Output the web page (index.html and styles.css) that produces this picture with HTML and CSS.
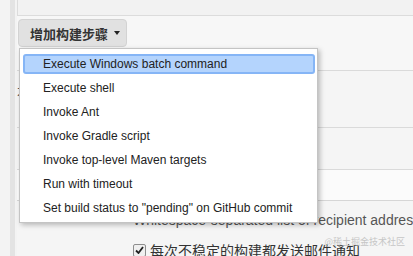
FILE: index.html
```html
<!DOCTYPE html>
<html lang="zh">
<head>
  <meta charset="UTF-8" />
  <title>增加构建步骤</title>
  <link rel="stylesheet" href="styles.css">
</head>
<body>
  <div class="page">
    <div class="rail"><div class="rail-band"></div></div>

    <div class="main">
      <div class="top-box"></div>

      <div class="steps">
        <button class="add-step">增加构建步骤 <span class="caret"></span></button>
      </div>

      <div class="form-row">
        <span class="row-label">不稳定构建</span>
      </div>
      <div class="form-row short"></div>
      <div class="form-input"></div>

      <div class="help">Whitespace-separated list of recipient addresses</div>

      <div class="check-row">
        <span class="checkbox">
          <svg width="9" height="8" viewBox="0 0 9 8"><path d="M1 4.5 L3.5 7 L8 1" fill="none" stroke="#222" stroke-width="1.8"/></svg>
        </span>
        <span>每次不稳定的构建都发送邮件通知</span>
      </div>
    </div>
  </div>

  <ul class="menu">
    <li class="active">Execute Windows batch command</li>
    <li>Execute shell</li>
    <li>Invoke Ant</li>
    <li>Invoke Gradle script</li>
    <li>Invoke top-level Maven targets</li>
    <li>Run with timeout</li>
    <li>Set build status to "pending" on GitHub commit</li>
  </ul>

  <div class="watermark">@稀土掘金技术社区</div>
</body>
</html>
```

FILE: styles.css
```css
* { margin: 0; padding: 0; box-sizing: border-box; }

body {
  font-family: "Liberation Sans", Arial, "Noto Sans CJK SC", sans-serif;
  background: #f5f5f5;
  color: #333;
  width: 413px;
  height: 256px;
  overflow: hidden;
  position: relative;
}

.page {
  display: flex;
  height: 256px;
}

.rail {
  width: 17px;
  flex: none;
  background: #f3f3f3;
  padding-left: 10px;
}

.rail-band {
  width: 5px;
  height: 100%;
  background: #e3e3e3;
}

.main {
  flex: 1;
}

.top-box {
  height: 16px;
  background: #f2f2f2;
  border-left: 1px solid #dcdcdc;
  border-bottom: 1px solid #dcdcdc;
}

.steps {
  height: 55px;
  padding: 3px 0 0 1px;
  border-bottom: 1px solid #dadada;
  background: #f7f7f7;
}

.add-step {
  display: flex;
  align-items: center;
  height: 28px;
  width: 109px;
  padding: 0 0 0 11px;
  background: #e1e1e1;
  border: 1px solid #d3d3d3;
  border-radius: 4px;
  font-family: "Noto Sans CJK SC", sans-serif;
  font-size: 13px;
  font-weight: bold;
  color: #333;
}

.caret {
  margin-left: 6px;
  border-left: 3.5px solid transparent;
  border-right: 3.5px solid transparent;
  border-top: 4px solid #222;
}

.form-row {
  height: 57px;
  border-bottom: 1px solid #dadada;
  padding-top: 12px;
}

.form-row.short {
  height: 42px;
}

.row-label {
  font-family: "Noto Sans CJK SC", sans-serif;
  font-size: 13px;
  color: #555;
}

.form-input {
  height: 31px;
  background: #fbfbfb;
  border-bottom: 1px solid #d6d6d6;
}

.help {
  padding: 11px 0 0 116px;
  font-size: 14px;
  line-height: 16px;
  color: #555;
  white-space: nowrap;
}

.check-row {
  display: flex;
  align-items: center;
  gap: 4px;
  margin-top: 12px;
  padding-left: 116px;
  height: 20px;
  font-family: "Noto Sans CJK SC", sans-serif;
  font-size: 14px;
  color: #333;
  white-space: nowrap;
}

.checkbox {
  display: flex;
  align-items: center;
  justify-content: center;
  width: 13px;
  height: 13px;
  border: 1px solid #8e8e8e;
  background: #f0f0f0;
  border-radius: 2px;
}

.menu {
  position: absolute;
  left: 19px;
  top: 48px;
  width: 299px;
  height: 175px;
  padding: 5px 1px 4px;
  list-style: none;
  background: #fff;
  border: 1px solid #c4c4c4;
  box-shadow: 2px 2px 5px rgba(0, 0, 0, 0.25);
  font-size: 12px;
  color: #222;
}

.menu li {
  height: 20px;
  line-height: 16px;
  margin: 0 1px 4px 2px;
  padding-left: 18px;
  border: 2px solid transparent;
  border-radius: 3px;
  white-space: nowrap;
}

.menu li.active {
  background: #b4d4fd;
  border-color: #85b5f6;
}

.watermark {
  position: absolute;
  right: 8px;
  top: 235px;
  font-family: "Noto Sans CJK SC", sans-serif;
  font-size: 9px;
  color: #c6c6c6;
}
```
